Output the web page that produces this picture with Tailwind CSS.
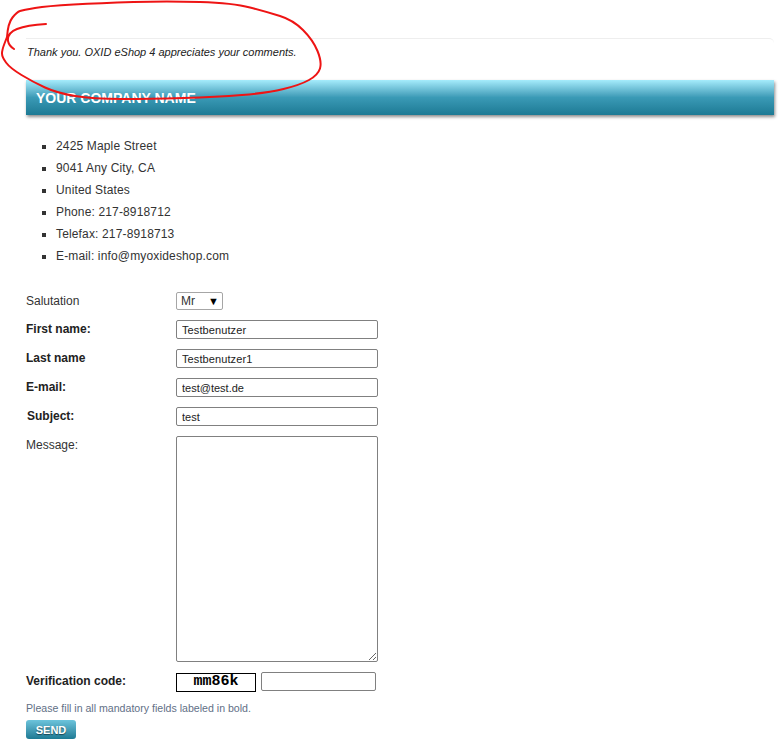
<!DOCTYPE html>
<html lang="en">
<head>
  <meta charset="UTF-8">
  <meta name="viewport" content="width=device-width, initial-scale=1.0">
  <title>Contact</title>
  <script src="https://cdn.jsdelivr.net/npm/@tailwindcss/browser@4"></script>
</head>
<body class="relative bg-white h-[744px] overflow-hidden font-['Liberation_Sans',Arial,sans-serif] text-[12px] text-[#333]">
  <div class="pt-[38px] pl-[26px] pr-[7px]">
    <!-- thank you box -->
    <div class="h-[42px] border-t border-[#eeeeee] rounded-tr-[5px]">
      <p class="pt-[7px] pl-px text-[11px] leading-[13px] italic text-[#222]">Thank you. OXID eShop 4 appreciates your comments.</p>
    </div>

    <h1 class="h-[35px] pl-[10px] leading-[36px] text-[14px] font-bold text-white bg-gradient-to-b from-[#a5ecfc] via-[#3a9ab6] via-50% to-[#1c7a94] shadow-[1px_2px_3px_rgba(0,0,0,0.45)]">YOUR COMPANY NAME</h1>

    <ul class="mt-[20px] pl-[16px] list-[square] tracking-[0.15px]">
      <li class="ml-[14px] h-[22px] leading-[22px]">2425 Maple Street</li>
      <li class="ml-[14px] h-[22px] leading-[22px]">9041 Any City, CA</li>
      <li class="ml-[14px] h-[22px] leading-[22px]">United States</li>
      <li class="ml-[14px] h-[22px] leading-[22px]">Phone: 217-8918712</li>
      <li class="ml-[14px] h-[22px] leading-[22px]">Telefax: 217-8918713</li>
      <li class="ml-[14px] h-[22px] leading-[22px]">E-mail: info@myoxideshop.com</li>
    </ul>

    <form class="mt-[25px]">
      <div class="flex h-[28px]">
        <label class="w-[150px] pt-[2px] leading-[14px]">Salutation</label>
        <div class="w-[47px] h-[18px] border border-[#a6a6a6] rounded-[2px] flex items-center pl-[4px] pr-[3px] justify-between leading-none"><span>Mr</span><span class="text-[11px] text-black">▼</span></div>
      </div>
      <div class="flex h-[29px]">
        <label class="w-[150px] pt-[2px] leading-[14px] font-bold text-[#222]">First name:</label>
        <input class="w-[202px] h-[19px] border border-[#808080] rounded-[2px] px-[5px] text-[11px] tracking-[0.1px] text-[#222]" value="Testbenutzer">
      </div>
      <div class="flex h-[29px]">
        <label class="w-[150px] pt-[2px] leading-[14px] font-bold text-[#222]">Last name</label>
        <input class="w-[202px] h-[19px] border border-[#808080] rounded-[2px] px-[5px] text-[11px] tracking-[0.1px] text-[#222]" value="Testbenutzer1">
      </div>
      <div class="flex h-[29px]">
        <label class="w-[150px] pt-[2px] leading-[14px] font-bold text-[#222]">E-mail:</label>
        <input class="w-[202px] h-[19px] border border-[#808080] rounded-[2px] px-[5px] text-[11px] text-[#222]" value="test@test.de">
      </div>
      <div class="flex h-[29px]">
        <label class="w-[150px] pl-px pt-[2px] leading-[14px] font-bold text-[#222]">Subject:</label>
        <input class="w-[202px] h-[19px] border border-[#808080] rounded-[2px] px-[5px] text-[11px] text-[#222]" value="test">
      </div>
      <div class="flex h-[236px]">
        <label class="w-[150px] pt-[2px] leading-[14px]">Message:</label>
        <textarea class="w-[202px] h-[226px] border border-[#808080] rounded-[2px]"></textarea>
      </div>
      <div class="flex h-[31px]">
        <label class="w-[150px] pt-[2px] leading-[14px] font-bold text-[#222]">Verification code:</label>
        <div class="w-[80px] h-[19px] mt-px border border-black flex items-center justify-center font-['Liberation_Mono',monospace] font-bold text-[15px] text-black">mm86k</div>
        <input class="ml-[5px] w-[115px] h-[19px] border border-[#808080] rounded-[2px]">
      </div>
      <p class="mt-[-1px] text-[10.6px] leading-[13px] text-[#5f6f86]">Please fill in all mandatory fields labeled in bold.</p>
      <button type="button" class="mt-[5px] block w-[50px] h-[19px] rounded-[3px] text-[11px] leading-[18px] font-bold text-white [text-shadow:0_1px_1px_rgba(0,0,0,0.5)] bg-gradient-to-b from-[#6cc4dc] to-[#1c7a94]">SEND</button>
    </form>
  </div>

  <!-- red marker scribble over the thank you message -->
  <svg class="absolute left-0 top-0 pointer-events-none" width="330" height="105" viewBox="0 0 330 105" fill="none">
    <path d="M7 37Q8 23 12.5 17.5Q17 12 20 11Q23 10 35 8Q47 6 73.5 4.5Q100 3 133.5 2Q167 1 200 2Q233 3 250 7.5Q267 12 280 16Q293 20 303 30Q313 40 317.5 51Q322 62 320 68.5Q318 75 309 80Q300 85 283.5 89Q267 93 242 95Q217 97 183.5 98Q150 99 121.5 99Q93 99 75 96Q57 93 45 87.5Q33 82 21.5 75Q10 68 6 62.5Q2 57 2 53.5Q2 50 4.5 43.5L7 37M46 24Q27 25 17 29Q7 33 8 41Q9 46 14 49" stroke="#ee1414" stroke-width="2" stroke-linecap="round" stroke-linejoin="round"/>
  </svg>
</body>
</html>
